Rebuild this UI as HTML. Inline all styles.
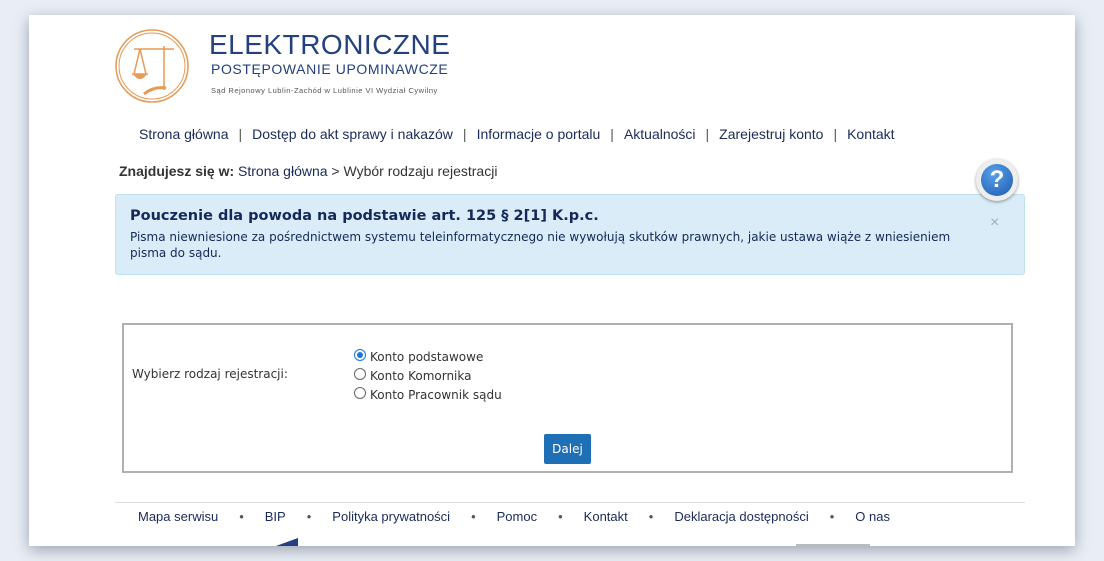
<!DOCTYPE html>
<html><head><meta charset="utf-8"><style>
body{margin:0;width:1104px;height:561px;background:#e9eef6;overflow:hidden;position:relative;font-family:"Liberation Sans",sans-serif}
.page{position:absolute;left:29px;top:15px;width:1046px;height:531px;background:#fff;box-shadow:0 4px 14px rgba(60,70,90,.45)}
.a{position:absolute;white-space:nowrap}
.nav{font-size:14px;color:#1a2a5a}
.nav span{color:#555;margin:0 10px}
.alert{position:absolute;left:115px;top:194px;width:908px;height:79px;background:#d9ecf7;border:1px solid #bfe0ef;border-radius:3px}
.v{font-family:"DejaVu Sans",sans-serif}
.box{position:absolute;left:122px;top:323px;width:887px;height:146px;border:2px solid #b0b0b0}
.r{position:absolute;width:10px;height:10px;border:1px solid #666;border-radius:50%;background:#fff}
</style></head><body>
<div class="page"></div>
<svg class="a" style="left:114px;top:28px" width="76" height="76" viewBox="0 0 76 76">
<circle cx="38" cy="38" r="36" fill="none" stroke="#e59a55" stroke-width="1.5"/>
<circle cx="38" cy="38" r="33" fill="none" stroke="#e59a55" stroke-width="1"/>
<path d="M20 21H60M50 18V62M26 21L20 46M26 21L32 46M18 46H34" stroke="#e59a55" stroke-width="1.5" fill="none"/>
<path d="M19 46Q26 56 33 46Z" fill="#e59a55"/>
<path d="M30 66Q40 58 52 60" stroke="#e59a55" stroke-width="3" fill="none"/>
</svg>
<div class="a" style="left:209px;top:29px;font-size:28px;color:#24407e;letter-spacing:.5px">ELEKTRONICZNE</div>
<div class="a" style="left:211px;top:61px;font-size:14px;color:#24407e;letter-spacing:.6px">POSTĘPOWANIE UPOMINAWCZE</div>
<div class="a" style="left:211px;top:86px;font-size:7.5px;color:#555;letter-spacing:.5px">Sąd Rejonowy Lublin-Zachód w Lublinie VI Wydział Cywilny</div>
<div class="a nav" style="left:139px;top:126px">Strona główna<span>|</span>Dostęp do akt sprawy i nakazów<span>|</span>Informacje o portalu<span>|</span>Aktualności<span>|</span>Zarejestruj konto<span>|</span>Kontakt</div>
<div class="a nav" style="left:119px;top:163px;color:#333"><b>Znajdujesz się w:</b> <span style="margin:0;color:#1a2a5a">Strona główna</span> &gt; Wybór rodzaju rejestracji</div>
<div class="alert"></div>
<div class="a" style="left:976px;top:159px;width:42px;height:42px;border-radius:50%;background:#eee;box-shadow:0 1px 3px rgba(0,0,0,.4)"></div>
<div class="a" style="left:981px;top:164px;width:32px;height:32px;border-radius:50%;background:radial-gradient(circle at 40% 30%,#5aa0e8,#1a5bb0);color:#fff;font:bold 24px/32px 'Liberation Sans';text-align:center">?</div>
<div class="a v" style="left:130px;top:208px;font-size:14.5px;font-weight:bold;color:#14285a">Pouczenie dla powoda na podstawie art. 125 § 2[1] K.p.c.</div>
<div class="a v" style="left:130px;top:229px;font-size:12px;color:#14285a;line-height:16px">Pisma niewniesione za pośrednictwem systemu teleinformatycznego nie wywołują skutków prawnych, jakie ustawa wiąże z wniesieniem<br>pisma do sądu.</div>
<div class="a" style="left:990px;top:214px;font-size:16px;color:#aab">×</div>
<div class="box"></div>
<div class="a v" style="left:132px;top:367px;font-size:12px;color:#333">Wybierz rodzaj rejestracji:</div>
<div class="r" style="left:354px;top:349px;border-color:#1a73e8"><div style="margin:2px;width:6px;height:6px;border-radius:50%;background:#1a73e8"></div></div>
<div class="r" style="left:354px;top:368px"></div>
<div class="r" style="left:354px;top:387px"></div>
<div class="a v" style="left:370px;top:348px;font-size:12px;color:#333;line-height:19px">Konto podstawowe<br>Konto Komornika<br>Konto Pracownik sądu</div>
<div class="a v" style="left:544px;top:434px;width:47px;height:30px;background:#1f6fb6;border-radius:2px;color:#fff;font-size:12px;line-height:30px;text-align:center">Dalej</div>
<div class="a" style="left:115px;top:502px;width:910px;height:1px;background:#ddd"></div>
<div class="a nav" style="left:138px;top:509px;font-size:13px">Mapa serwisu<span style="margin:0 21px">•</span>BIP<span style="margin:0 21px">•</span>Polityka prywatności<span style="margin:0 21px">•</span>Pomoc<span style="margin:0 21px">•</span>Kontakt<span style="margin:0 21px">•</span>Deklaracja dostępności<span style="margin:0 21px">•</span>O nas</div>
<svg class="a" style="left:276px;top:538px" width="24" height="8"><path d="M0 8L22 0V8Z" fill="#24407e"/></svg>
<div class="a" style="left:796px;top:544px;width:74px;height:2px;background:#bbb"></div>
</body></html>
